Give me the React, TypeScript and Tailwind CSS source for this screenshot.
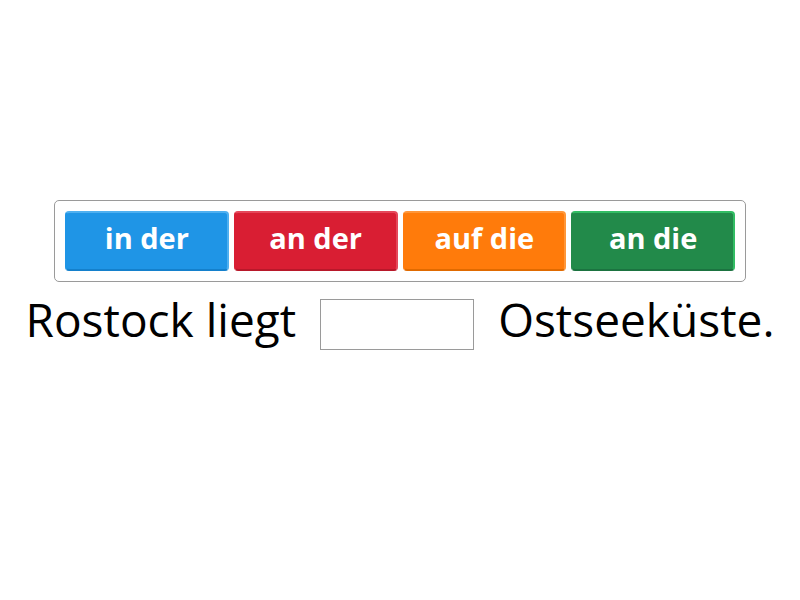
import React from "react";

const btns = [
  { t: "in der", cls: "bg-[#1f95e6] border-t-[#4fb0f0] border-r-[#4fb0f0] border-b-[#1480cc] border-l-[#1f95e6]" },
  { t: "an der", cls: "bg-[#d91e33] border-t-[#e5475a] border-r-[#e5475a] border-b-[#b8182a] border-l-[#d91e33]" },
  { t: "auf die", cls: "bg-[#ff7b0b] border-t-[#ff9639] border-r-[#ff9639] border-b-[#e06a00] border-l-[#ff7b0b]" },
  { t: "an die", cls: "bg-[#228a4a] border-t-[#32bd64] border-r-[#32bd64] border-b-[#1b7340] border-l-[#228a4a]" },
];

export default function App() {
  return (
    <div className="w-[800px] h-[600px] bg-white flex flex-col items-center pt-[200px]" style={{ fontFamily: '"Open Sans", sans-serif' }}>
      <div className="w-[692px] h-[82px] border border-[#9a9a9a] rounded-[5px] p-[10px] flex gap-[5px]">
        {btns.map((b) => (
          <div
            key={b.t}
            className={`flex-1 h-[60px] rounded-[4px] border-[2px] flex items-start justify-center pt-[10px] text-white font-bold text-[29px] leading-none ${b.cls}`}
          >
            <span>{b.t}</span>
          </div>
        ))}
      </div>
      <div className="flex items-start justify-center mt-[14px] text-black text-[46px] leading-none">
        <span>Rostock liegt</span>
        <div className="w-[154px] h-[51px] border border-[#9a9a9a] mt-[3px] ml-[24px] mr-[24px]" />
        <span>Ostseeküste.</span>
      </div>
    </div>
  );
}
